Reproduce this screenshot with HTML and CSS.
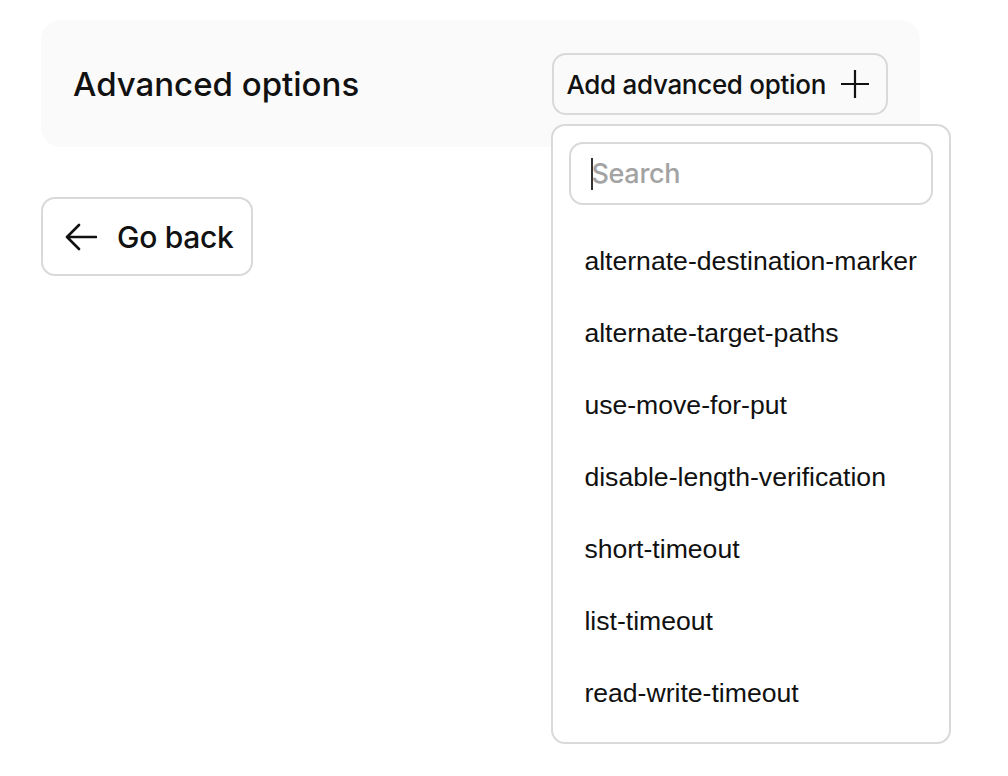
FILE: index.html
```html
<!DOCTYPE html>
<html>
<head>
<meta charset="utf-8">
<link rel="stylesheet" href="styles.css">
</head>
<body>
<div class="page">
  <div class="panel">
    <h2 class="title">Advanced options</h2>
    <div class="add-wrap">
      <button class="add-btn">Add advanced option
        <svg class="plus" width="30" height="30" viewBox="0 0 30 30"><path d="M15 1v28M1 15h28" stroke="#111" stroke-width="2.2" fill="none"/></svg>
      </button>
      <div class="dropdown">
        <div class="search"><span class="caret"></span><span class="ph">Search</span></div>
        <ul class="list">
          <li>alternate-destination-marker</li>
          <li>alternate-target-paths</li>
          <li>use-move-for-put</li>
          <li>disable-length-verification</li>
          <li>short-timeout</li>
          <li>list-timeout</li>
          <li>read-write-timeout</li>
        </ul>
      </div>
    </div>
  </div>
  <button class="back-btn">
    <svg class="arrow" width="32" height="28" viewBox="0 0 32 28"><path d="M31 14H2M14 2L2 14l12 12" stroke="#111" stroke-width="2.6" fill="none" stroke-linecap="round" stroke-linejoin="round"/></svg>
    <span>Go back</span>
  </button>
</div>
</body>
</html>
```
FILE: styles.css
```css
* { box-sizing: border-box; }
html, body { margin: 0; padding: 0; background: #fff; }
body { font-family: Inter, "Liberation Sans", sans-serif; color: #111; }
.page { padding: 20px 0 0 41px; width: 1008px; height: 776px; overflow: hidden; }
.panel {
  width: 879px; height: 127px;
  background: #fafafa;
  border-radius: 20px;
  display: flex; align-items: center; justify-content: space-between;
  padding: 0 32px;
}
.title { margin: 0; font-size: 33px; font-weight: 500; letter-spacing: 0; }
.add-wrap { position: relative; }
.add-btn {
  height: 62px;
  margin-top: 1px;
  display: flex; align-items: center; gap: 14px;
  padding: 0 16px 0 12px;
  background: #fafafa;
  border: 2px solid #d9d9d9;
  border-radius: 14px;
  font-family: Inter, "Liberation Sans", sans-serif;
  font-size: 26px; font-weight: 500; color: #111;
  letter-spacing: -0.3px;
}
.dropdown {
  position: absolute; top: 72px; left: -1px;
  width: 400px; height: 620px;
  background: #fff;
  border: 2px solid #d9d9d9;
  border-radius: 14px;
  padding: 16px 0 0 16px;
}
.search {
  width: 364px;
  height: 63px;
  border: 2px solid #d9d9d9;
  border-radius: 14px;
  display: flex; align-items: center;
  padding-left: 20px;
  font-size: 27px; color: #a3a3a3; font-weight: 500;
  letter-spacing: -0.3px;
  position: relative;
}
.caret { position: absolute; left: 20px; top: 14px; width: 2px; height: 32px; background: #333; }
.list { list-style: none; margin: 20px 0 0 0; padding: 0; }
.list li {
  height: 72px; line-height: 72px;
  padding-left: 15px;
  font-family: "Liberation Sans", Arial, sans-serif;
  font-size: 26.6px; color: #111;
}
.back-btn {
  margin-top: 50px;
  width: 212px; height: 79px;
  display: flex; align-items: center; gap: 20px;
  padding: 0 0 0 22px;
  background: #fff;
  border: 2px solid #d9d9d9;
  border-radius: 14px;
  font-family: Inter, "Liberation Sans", sans-serif;
  font-size: 30px; font-weight: 500; color: #111;
  letter-spacing: -0.3px;
}
```
